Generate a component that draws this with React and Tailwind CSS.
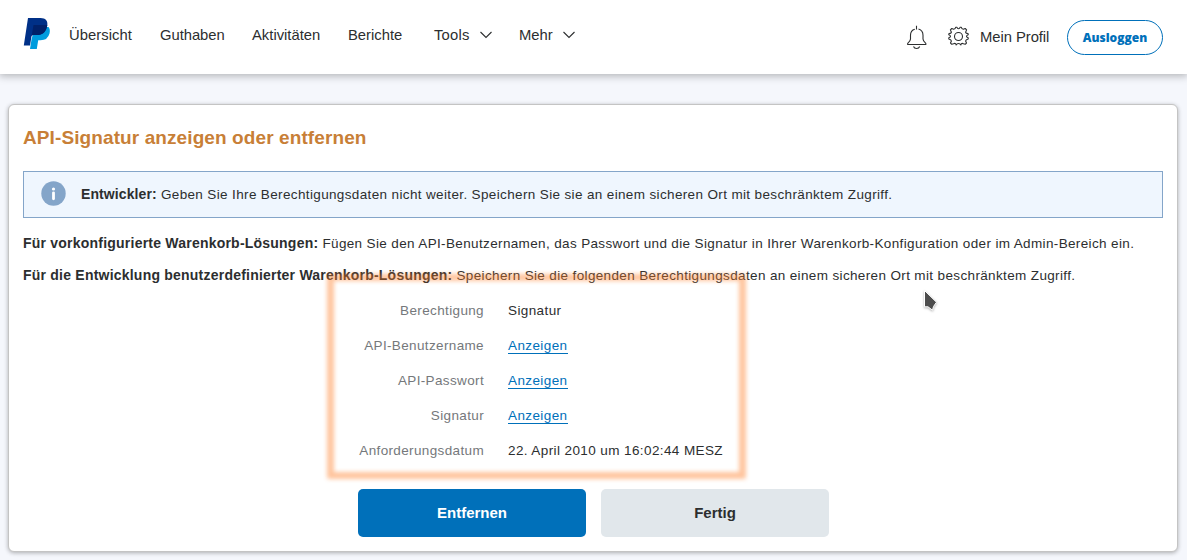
import React from "react";

function Chevron({ className }) {
  return (
    <svg className={className} width="12" height="8" viewBox="0 0 12 8" fill="none" stroke="#2c2e2f" strokeWidth="1.1">
      <path d="M.5 1 6 6.5 11.5 1" />
    </svg>
  );
}

function Logo() {
  return (
    <svg className="mt-[18px] ml-[23px] h-[32px] w-[28px] shrink-0" viewBox="0 0 28 32">
      <path d="M12 9H25.5Q27.5 11.2 26.5 15.5 24.7 22.3 17.5 22.3H15.2L13.8 31H7L8.6 21Z" fill="#009cde" />
      <path d="M5 0H17.5C22.5 0 25 2.8 24.3 7.3 23.2 14 19.5 17.1 13.7 17.1H10.2C9.2 17.1 8.6 17.6 8.4 18.7L7 27.6H.8Z" fill="#003087" />
      <path d="M10.5 7H24.3C23.4 14 19.5 17.1 13.7 17.1H10.2C9.5 17.1 9 17.4 8.7 18Z" fill="#012169" />
    </svg>
  );
}

function Header() {
  return (
    <header className="relative flex h-[74px] bg-white text-[14.8px] leading-[18px] shadow-[0_1px_8px_1px_rgba(0,0,0,0.28)]">
      <Logo />
      <nav className="flex h-[18px] pt-[26px] whitespace-nowrap">
        <a className="ml-[18px] w-[91px] tracking-[0.06px]">Übersicht</a>
        <a className="w-[92px] tracking-[-0.05px]">Guthaben</a>
        <a className="w-[96px]">Aktivitäten</a>
        <a className="w-[86px]">Berichte</a>
        <a className="flex w-[85px]"><span className="w-[45.5px] tracking-[0.2px]">Tools</span><Chevron className="mt-[5px]" /></a>
        <a className="flex"><span className="w-[43.5px]">Mehr</span><Chevron className="mt-[5px]" /></a>
      </nav>
      <div className="mr-[24px] ml-auto flex">
        <svg className="mt-[25px] mr-[21px] h-[25px] w-[20px]" viewBox="0 0 20 25" fill="none" stroke="#2c2e2f" strokeWidth="1.1">
          <path d="M9.5 .8V4.5M7.8 4.2C5 4.9 3.5 7.3 3.5 10.3V14Q3.5 16 .7 18.4V19.5H18.8V18.4Q16 16 16 14V10.3C16 7.3 14.3 4.8 11.5 4M6.5 21.5Q7.3 23.5 9.6 23.5T12.7 21.5" />
        </svg>
        <svg className="mt-[26px] mr-[11px] h-[21px] w-[21px]" viewBox="0 0 21 21" fill="none" stroke="#2c2e2f" strokeWidth="1.1" strokeLinejoin="round">
          <circle cx="10.5" cy="10.5" r="4" />
          <path d="M8.3 19.4 7.6 17.6Q6.6 17 5.6 17.8L3.8 18.3 2.5 17 3.4 15Q3.3 13.6 .8 13V11.8Q2.5 11.3 2.5 10.3T.8 8.7V7.7Q3.8 7.2 3.3 6L2.4 3.9 3.8 2.5 5.7 3.3Q7.3 3.2 7.8 1.2H8.9Q9.3 2.8 10.5 2.8T12.1 1.2H13.2Q13.7 3.2 15.3 3.3L17.2 2.5 18.6 3.9 17.7 6Q17.2 7.2 20.2 7.7V8.7Q18.5 9.3 18.5 10.3T20.2 11.8V13Q17.7 13.6 17.6 15L18.5 17 17.2 18.3 15.4 17.8Q14.4 17 13.4 17.6L12.7 19.4M8.3 19.2Q8.8 17.5 10.5 17.5T12.7 19.2" />
        </svg>
        <span className="mt-[28px] w-[87px] tracking-[-0.05px] whitespace-nowrap">Mein Profil</span>
        <button className="mt-[20px] h-[35px] w-[96px] rounded-full border border-[#0070ba] font-['Open_Sans',sans-serif] text-[12px] font-extrabold text-[#0070ba]">Ausloggen</button>
      </div>
    </header>
  );
}

function Row({ label, value, link }) {
  return (
    <div className="flex h-[35px] pt-[8px] leading-[20px] whitespace-nowrap">
      <dt className="w-[475px] text-right text-[#75787b]">{label}</dt>
      <dd className="ml-[24px] tracking-[0.4px]">
        {link ? <a className="mt-[2px] block h-[16px] border-b border-[#0070ba] leading-[16px] text-[#0070ba]">{value}</a> : value}
      </dd>
    </div>
  );
}

export default function App() {
  return (
    <div className="relative h-[560px] overflow-hidden bg-[#f5f7fc] font-['Liberation_Sans',sans-serif] text-[#2c2e2f]">
      <Header />
      <main className="mt-[30px] mr-[9px] ml-[8px] h-[448px] rounded-[6px] border border-[#c4c4c4] bg-white text-[13.5px] tracking-[0.36px] shadow-[0_1px_4px_rgba(0,0,0,0.3)]">
        <h1 className="mt-[21px] ml-[14px] text-[19px] leading-[24px] font-bold tracking-[0.1px] text-[#c87f37]">API-Signatur anzeigen oder entfernen</h1>
        <section className="mx-[14px] mt-[21px] flex h-[47px] items-center border border-[#84a5c9] bg-[#eff6fe]">
          <svg className="mb-[3px] ml-[17px] h-[25px] w-[25px]" viewBox="0 0 25 25">
            <circle cx="12.5" cy="12.5" r="12.2" fill="#84a5c9" />
            <circle cx="12.5" cy="8" r="1.6" fill="white" />
            <path d="M12.5 11.8V17.8" stroke="white" strokeWidth="2.8" strokeLinecap="round" />
          </svg>
          <p className="ml-[15px] whitespace-nowrap"><b className="text-[14px] tracking-[0.1px]">Entwickler:</b> Geben Sie Ihre Berechtigungsdaten nicht weiter. Speichern Sie sie an einem sicheren Ort mit beschränktem Zugriff.</p>
        </section>
        <p className="mt-[15px] ml-[14px] h-[20px] leading-[20px] whitespace-nowrap"><b className="text-[14px] tracking-[0.22px]">Für vorkonfigurierte Warenkorb-Lösungen:</b> Fügen Sie den API-Benutzernamen, das Passwort und die Signatur in Ihrer Warenkorb-Konfiguration oder im Admin-Bereich ein.</p>
        <p className="mt-[12px] ml-[14px] h-[20px] leading-[20px] whitespace-nowrap"><b className="text-[14px] tracking-[0.22px]">Für die Entwicklung benutzerdefinierter Warenkorb-Lösungen:</b> Speichern Sie die folgenden Berechtigungsdaten an einem sicheren Ort mit beschränktem Zugriff.</p>
        <dl className="mt-[8px]">
          <Row label="Berechtigung" value="Signatur" />
          <Row label="API-Benutzername" value="Anzeigen" link />
          <Row label="API-Passwort" value="Anzeigen" link />
          <Row label="Signatur" value="Anzeigen" link />
          <Row label="Anforderungsdatum" value="22. April 2010 um 16:02:44 MESZ" />
        </dl>
        <div className="mt-[21px] ml-[349px] flex gap-[15px] text-[15px] font-bold tracking-normal">
          <button className="h-[48px] w-[228px] rounded-[5px] bg-[#0070ba] text-white">Entfernen</button>
          <button className="h-[48px] w-[228px] rounded-[5px] bg-[#e1e7eb]">Fertig</button>
        </div>
      </main>
      <div className="absolute top-[274px] left-[327px] h-[205px] w-[419px] rounded-[2px] border-[7px] border-[#ff7f27]/45 blur-[2px]" />
      <svg className="absolute top-[289px] left-[922px] h-[24px] w-[17px] drop-shadow-[0_1px_1px_rgba(0,0,0,0.3)]" viewBox="0 0 17 24">
        <path d="M2.5 1.5V17.8H6L10.5 21.2 11.5 17.5 14.5 13.2Z" fill="#4d4d4d" stroke="white" />
      </svg>
    </div>
  );
}
